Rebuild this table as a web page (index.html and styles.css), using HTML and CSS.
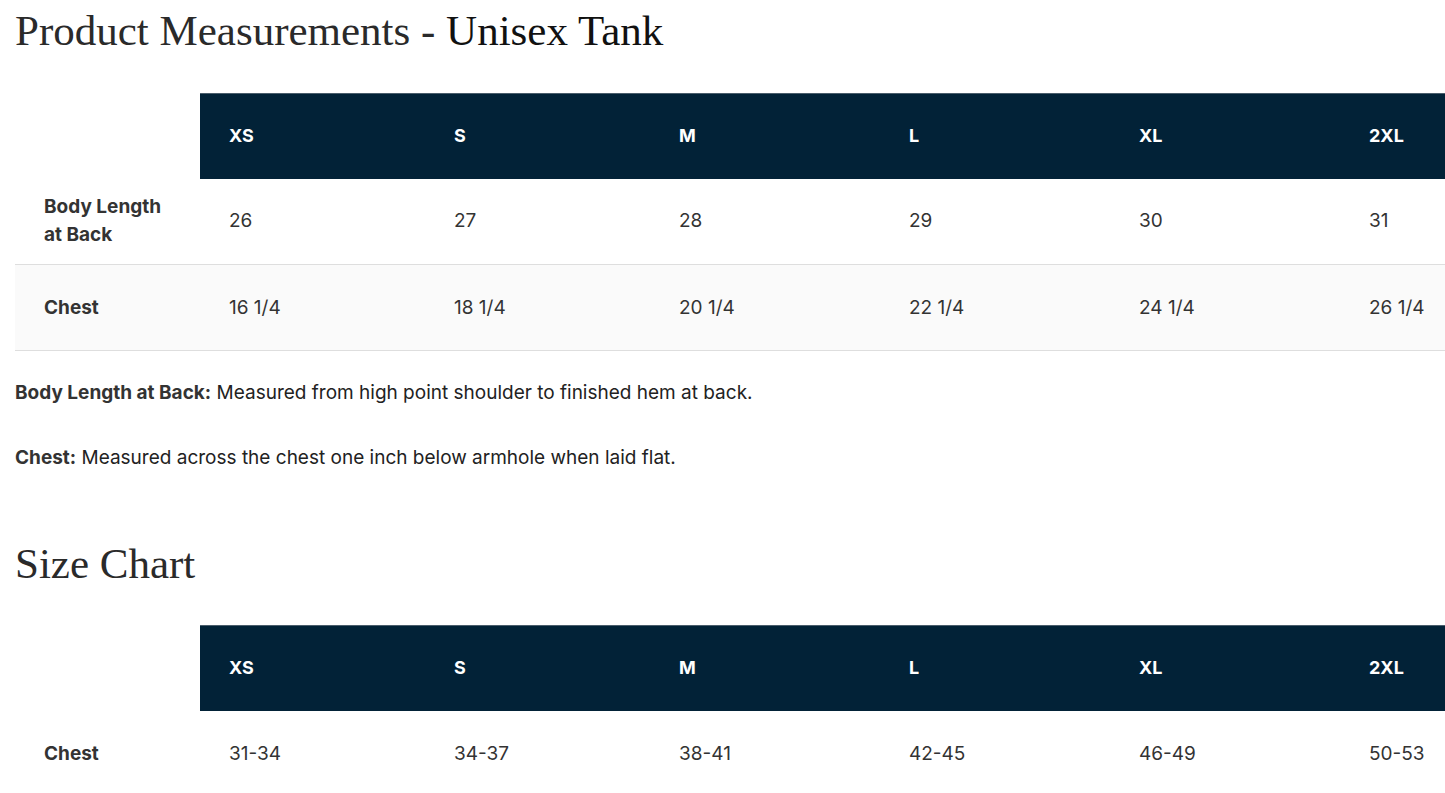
FILE: index.html
```html
<!DOCTYPE html>
<html>
<head>
<meta charset="utf-8">
<link rel="stylesheet" href="styles.css">
</head>
<body>
<h1 class="title"><span class="title-main">Product Measurements - </span><span class="title-sub">Unisex Tank</span></h1>
<table class="chart">
  <colgroup>
    <col class="c-label"><col class="c1"><col class="c2"><col class="c3"><col class="c4"><col class="c5"><col class="c6">
  </colgroup>
  <thead>
    <tr><th class="blank"></th><th>XS</th><th>S</th><th>M</th><th>L</th><th>XL</th><th>2XL</th></tr>
  </thead>
  <tbody>
    <tr><td class="label">Body Length<br>at Back</td><td>26</td><td>27</td><td>28</td><td>29</td><td>30</td><td>31</td></tr>
    <tr class="alt"><td class="label">Chest</td><td>16 1/4</td><td>18 1/4</td><td>20 1/4</td><td>22 1/4</td><td>24 1/4</td><td>26 1/4</td></tr>
  </tbody>
</table>
<p class="note"><strong>Body Length at Back:</strong> Measured from high point shoulder to finished hem at back.</p>
<p class="note"><strong>Chest:</strong> Measured across the chest one inch below armhole when laid flat.</p>
<h2 class="title title2">Size Chart</h2>
<table class="chart">
  <colgroup>
    <col class="c-label"><col class="c1"><col class="c2"><col class="c3"><col class="c4"><col class="c5"><col class="c6">
  </colgroup>
  <thead>
    <tr><th class="blank"></th><th>XS</th><th>S</th><th>M</th><th>L</th><th>XL</th><th>2XL</th></tr>
  </thead>
  <tbody>
    <tr class="plain"><td class="label">Chest</td><td>31-34</td><td>34-37</td><td>38-41</td><td>42-45</td><td>46-49</td><td>50-53</td></tr>
  </tbody>
</table>
</body>
</html>
```

FILE: styles.css
```css
html, body {
  margin: 0;
  padding: 0;
  overflow: hidden;
  background: #fff;
}
body {
  padding: 0 0 0 15px;
  font-family: Inter, "Noto Sans", sans-serif;
  color: #333;
  width: 1460px;
}
.title {
  margin: 0;
  padding-top: 5px;
  font-family: "Liberation Serif", "Times New Roman", serif;
  font-weight: 400;
  font-size: 43px;
  line-height: 52px;
  color: #2a2a2a;
}
.title-sub {
  color: #111;
}
.title2 {
  margin-top: 63px;
  color: #2a2a2a;
}
.chart {
  border-collapse: collapse;
  table-layout: fixed;
  width: 1445px;
  margin-top: 36px;
  font-size: 19px;
}
.title2 + .chart {
  margin-top: 35px;
}
.c-label { width: 185px; }
.c1 { width: 225px; }
.c2 { width: 225px; }
.c3 { width: 230px; }
.c4 { width: 230px; }
.c5 { width: 230px; }
.c6 { width: 120px; }
.chart th {
  background: #022237;
  color: #fff;
  font-weight: 700;
  font-size: 18px;
  text-align: left;
  height: 85px;
  padding: 0 0 1px 29px;
  box-sizing: border-box;
  border-top: 1px solid #4a5d6b;
}
.chart th.blank {
  background: #fff;
  border-top: none;
}
.chart td {
  height: 86px;
  padding: 0 0 0 29px;
  box-sizing: border-box;
  border-bottom: 1px solid #dedede;
  line-height: 28px;
  color: #333;
}
.chart tr.plain td {
  border-bottom: none;
}
.chart td.label {
  font-weight: 700;
}
.chart tr.alt td {
  background: #fafafa;
}
.note {
  margin: 29px 0 0;
  font-size: 19px;
  line-height: 25px;
  color: #222;
}
.note + .note {
  margin-top: 40px;
}
.note strong {
  font-weight: 700;
  color: #333;
}
```
